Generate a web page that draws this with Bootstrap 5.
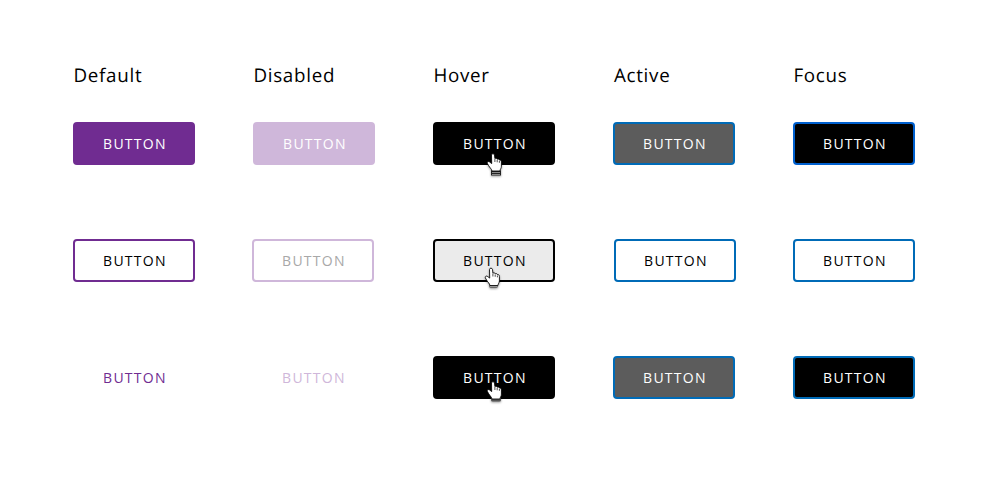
<!DOCTYPE html>
<html lang="en"><head><meta charset="utf-8"><title>Button states</title>
<link href="https://cdn.jsdelivr.net/npm/bootstrap@5.3.0/dist/css/bootstrap.min.css" rel="stylesheet">
<style>
body{font-family:"Open Sans","Noto Sans",sans-serif;color:#000;background:#fff;overflow:hidden;text-rendering:geometricPrecision}
.states{display:grid;grid-template-columns:repeat(5,122px);column-gap:58px;padding:61px 0 0 73px}
.state-title{font-size:18.8px;line-height:28px;letter-spacing:.72px;height:61px;margin:0;padding-left:.4px;font-weight:400}
.cell{height:117px;position:relative}
.btn{width:122px;height:43px;border:2px solid;border-radius:4px;font-size:14px;font-weight:400;letter-spacing:1.25px;line-height:39px;padding:0 0 0 1.8px;display:block}
.solid{background:#702c91;border-color:#702c91;color:#fff}
.solid-off{background:#cfb7da;border-color:#cfb7da;color:#fff}
.dark-hover{background:#000;border-color:#000;color:#fff}
.gray-active{background:#5c5c5c;border-color:#006bb7;color:#fff}
.dark-focus{background:#000;border-color:#006bb7;color:#fff}
.focus-first{border-color:#0060cf}
.line{border-color:#702c91;color:#000}
.line-off{border-color:#cfb7da;color:#a8a8a8}
.line-hover{background:#ebebeb;border-color:#000;color:#000}
.line-focus{border-color:#006bb7;color:#000}
.ghost{border-color:transparent;color:#702c91}
.ghost-off{border-color:transparent;color:#cfb7da}
.shift-left{margin-left:-1px}.shift-right{margin-left:1px}
.title-active{margin-left:.5px}
.pointer{position:absolute;width:18px;height:26px;left:53px;top:30px;filter:drop-shadow(0 1px 1px #0006)}
.pointer-mid{left:51px;top:28px}.pointer-low{top:25px}
</style>
<script src="https://cdn.jsdelivr.net/npm/bootstrap@5.3.0/dist/js/bootstrap.bundle.min.js"></script></head>
<body>
<svg width="0" height="0" class="position-absolute"><symbol id="hand" viewBox="0 0 18 26"><path d="M6 3C6 1.2 8.8 1.2 9 3L9.4 6.6C10.4 6 11.5 6.4 11.7 7.3C12.6 6.7 13.7 7.1 13.9 8.1C15.1 7.7 15.9 8.6 15.9 10V14.2C15.9 16.4 14.7 17 14.4 19H6.4C6.2 17 4.3 15.8 3.1 13.6L1.8 11.3C1.4 9.8 3 8.9 4.3 10.1L6.2 11.6Z" fill="#fff" stroke="#000" stroke-width=".85"/><path d="M9.4 7v3M11.7 8v2.3M13.9 9v1.8" stroke="#000" stroke-width=".7"/></symbol></svg>
<main class="states">
<h2 class="state-title">Default</h2><h2 class="state-title">Disabled</h2><h2 class="state-title">Hover</h2><h2 class="state-title title-active">Active</h2><h2 class="state-title">Focus</h2>
<div class="cell"><button class="btn solid">BUTTON</button></div><div class="cell"><button class="btn solid-off">BUTTON</button></div><div class="cell"><button class="btn dark-hover">BUTTON</button><svg class="pointer"><path d="M5 18.5h10v5H5z" fill="#222"/><path d="M6 20.5h8M6 22.5h8" stroke="#888"/><use href="#hand" x="-.5"/></svg></div><div class="cell"><button class="btn gray-active">BUTTON</button></div><div class="cell"><button class="btn dark-focus focus-first">BUTTON</button></div>
<div class="cell"><button class="btn line">BUTTON</button></div><div class="cell"><button class="btn line-off shift-left">BUTTON</button></div><div class="cell"><button class="btn line-hover">BUTTON</button><svg class="pointer pointer-mid"><rect x="5.5" y="17.5" width="8" height="3" rx="1" fill="#999" stroke="#555" stroke-width=".7"/><use href="#hand" x="-.5" y="-.5"/></svg></div><div class="cell"><button class="btn line-focus shift-right">BUTTON</button></div><div class="cell"><button class="btn line-focus">BUTTON</button></div>
<div class="cell"><button class="btn ghost">BUTTON</button></div><div class="cell"><button class="btn ghost-off shift-left">BUTTON</button></div><div class="cell"><button class="btn dark-hover">BUTTON</button><svg class="pointer pointer-low"><rect x="5" y="16" width="10" height="4.5" rx="1.5" fill="#555"/><use href="#hand" x="-.5" y="-1"/></svg></div><div class="cell"><button class="btn gray-active">BUTTON</button></div><div class="cell"><button class="btn dark-focus">BUTTON</button></div>
</main></body></html>
